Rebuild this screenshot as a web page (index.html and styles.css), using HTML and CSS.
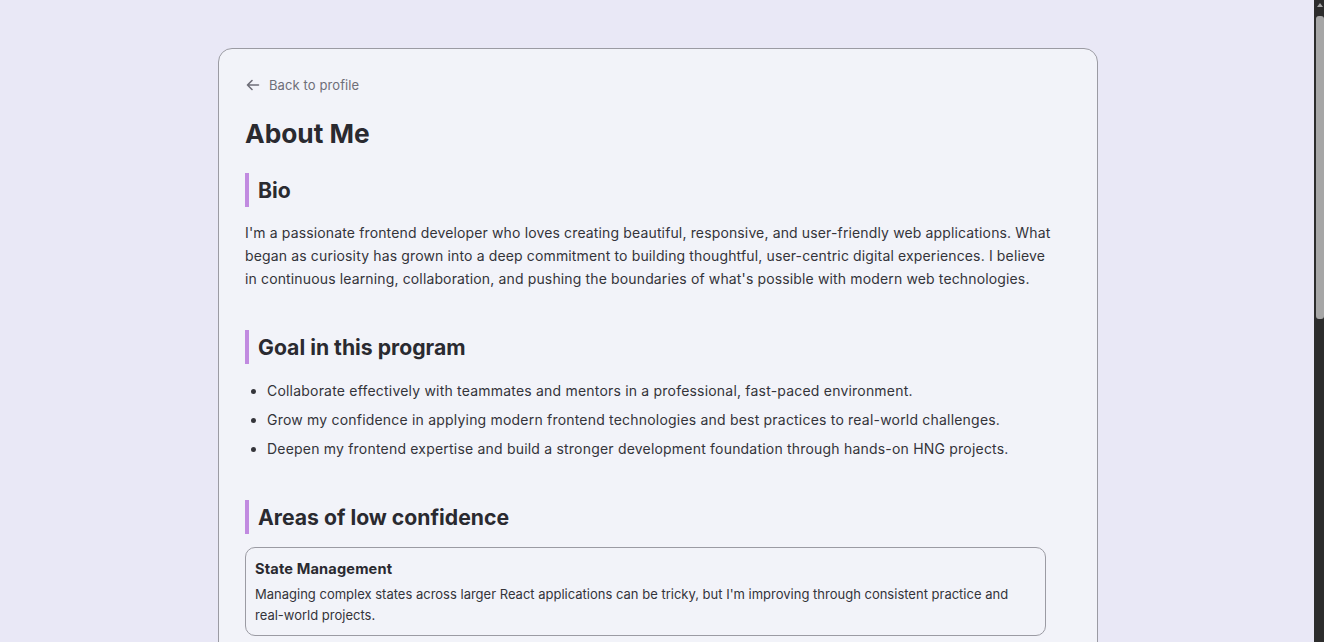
FILE: index.html
```html
<!DOCTYPE html>
<html lang="en">
<head>
<meta charset="utf-8">
<title>About Me</title>
<link rel="stylesheet" href="styles.css">
</head>
<body>
<main class="page">
  <article class="card">
    <a class="back" href="#">
      <svg class="back-icon" width="16" height="16" viewBox="0 0 16 16" fill="none" stroke="currentColor" stroke-width="1.6" stroke-linecap="round" stroke-linejoin="round"><path d="M13.5 8H2.5M7 3.5 2.5 8 7 12.5"/></svg>
      <span>Back to profile</span>
    </a>
    <h1 class="title">About Me</h1>

    <section class="section">
      <h2 class="section-title">Bio</h2>
      <p class="text">I'm a passionate frontend developer who loves creating beautiful, responsive, and user-friendly web applications. What began as curiosity has grown into a deep commitment to building thoughtful, user-centric digital experiences. I believe in continuous learning, collaboration, and pushing the boundaries of what's possible with modern web technologies.</p>
    </section>

    <section class="section">
      <h2 class="section-title">Goal in this program</h2>
      <ul class="goals">
        <li>Collaborate effectively with teammates and mentors in a professional, fast-paced environment.</li>
        <li>Grow my confidence in applying modern frontend technologies and best practices to real-world challenges.</li>
        <li>Deepen my frontend expertise and build a stronger development foundation through hands-on HNG projects.</li>
      </ul>
    </section>

    <section class="section">
      <h2 class="section-title">Areas of low confidence</h2>
      <div class="areas">
        <div class="area">
          <h3 class="area-title">State Management</h3>
          <p class="area-text">Managing complex states across larger React applications can be tricky, but I'm improving through consistent practice and real-world projects.</p>
        </div>
        <div class="area">
          <h3 class="area-title">Testing</h3>
          <p class="area-text">Writing thorough unit and integration tests is something I'm still building confidence in, and I'm practicing it on every project.</p>
        </div>
      </div>
    </section>
  </article>
</main>
<div class="scrollbar" aria-hidden="true">
  <span class="scroll-arrow"></span>
  <span class="scroll-thumb"></span>
</div>
</body>
</html>
```

FILE: styles.css
```css
* { box-sizing: border-box; }
html, body { margin: 0; padding: 0; }
body {
  background: #e9e8f6;
  font-family: Inter, "Noto Sans", sans-serif;
  color: #2b2b31;
}
.page {
  padding: 48px 8px 48px 0;
}
.card {
  width: 880px;
  margin: 0 auto;
  background: #f2f3f9;
  border: 1px solid #9b9ba3;
  border-radius: 14px;
  padding: 27px 26px 40px;
}
.back {
  display: inline-flex;
  align-items: center;
  gap: 8px;
  color: #6e6e78;
  text-decoration: none;
  font-size: 13px;
  line-height: 18px;
  letter-spacing: 0.1px;
}
.back-icon { display: block; }
.title {
  margin: 20px 0 0;
  font-size: 26.3px;
  line-height: 34px;
  font-weight: 700;
  color: #2a2a30;
}
.section { margin-top: 22px; }
.section + .section { margin-top: 40px; }
.section-title {
  margin: 0;
  border-left: 4px solid #c18ae0;
  padding-left: 9px;
  font-size: 21.2px;
  line-height: 34px;
  font-weight: 700;
  color: #2a2a30;
}
.text {
  margin: 14px 0 0;
  max-width: 808px;
  font-size: 14px;
  line-height: 23px;
  letter-spacing: 0.14px;
  color: #34343a;
}
.goals {
  margin: 15px 0 40px;
  padding-left: 22px;
  font-size: 14px;
  line-height: 23px;
  letter-spacing: 0.2px;
  color: #34343a;
}
.goals li + li { margin-top: 6px; }
.section:last-child { margin-top: 0; }
.areas {
  margin-top: 13px;
  max-width: 801px;
  display: flex;
  flex-direction: column;
  gap: 12px;
}
.area {
  border: 1px solid #9b9ba3;
  border-radius: 10px;
  padding: 11px 9px 9px;
}
.area-title {
  margin: 0;
  font-size: 14.6px;
  line-height: 20px;
  font-weight: 700;
  letter-spacing: 0.15px;
  color: #2a2a30;
}
.area-text {
  margin: 5px 0 0;
  font-size: 13px;
  line-height: 21px;
  color: #34343a;
}
.scrollbar {
  position: fixed;
  top: 0;
  right: 0;
  bottom: 0;
  width: 10px;
  background: #2c2c2c;
}
.scroll-arrow {
  position: absolute;
  top: 3px;
  left: 3px;
  width: 0;
  height: 0;
  border-left: 3.5px solid transparent;
  border-right: 3.5px solid transparent;
  border-bottom: 4px solid #a6a6a6;
}
.scroll-thumb {
  position: absolute;
  top: 16px;
  left: 2px;
  right: 0;
  height: 303px;
  background: #a6a6a6;
  border-radius: 3px;
}
```
